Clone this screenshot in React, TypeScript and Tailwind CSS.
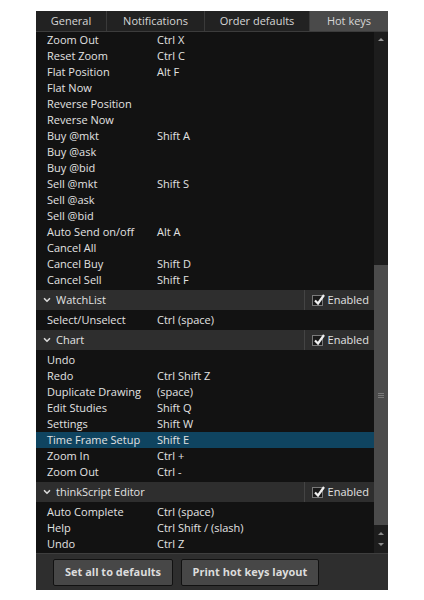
import { ChevronDown } from "lucide-react";

type Row = { label: string; keys?: string; selected?: boolean };

const orderRows: Row[] = [
  { label: "Zoom Out", keys: "Ctrl X" },
  { label: "Reset Zoom", keys: "Ctrl C" },
  { label: "Flat Position", keys: "Alt F" },
  { label: "Flat Now" },
  { label: "Reverse Position" },
  { label: "Reverse Now" },
  { label: "Buy @mkt", keys: "Shift A" },
  { label: "Buy @ask" },
  { label: "Buy @bid" },
  { label: "Sell @mkt", keys: "Shift S" },
  { label: "Sell @ask" },
  { label: "Sell @bid" },
  { label: "Auto Send on/off", keys: "Alt A" },
  { label: "Cancel All" },
  { label: "Cancel Buy", keys: "Shift D" },
  { label: "Cancel Sell", keys: "Shift F" },
];

const watchRows: Row[] = [{ label: "Select/Unselect", keys: "Ctrl (space)" }];

const chartRows: Row[] = [
  { label: "Undo" },
  { label: "Redo", keys: "Ctrl Shift Z" },
  { label: "Duplicate Drawing", keys: "(space)" },
  { label: "Edit Studies", keys: "Shift Q" },
  { label: "Settings", keys: "Shift W" },
  { label: "Time Frame Setup", keys: "Shift E", selected: true },
  { label: "Zoom In", keys: "Ctrl +" },
  { label: "Zoom Out", keys: "Ctrl -" },
];

const scriptRows: Row[] = [
  { label: "Auto Complete", keys: "Ctrl (space)" },
  { label: "Help", keys: "Ctrl Shift / (slash)" },
  { label: "Undo", keys: "Ctrl Z" },
];

const tabs = ["General", "Notifications", "Order defaults", "Hot keys"];

function HotkeyRow({ row }: { row: Row }) {
  return (
    <div className={`flex h-4 shrink-0 items-center ${row.selected ? "bg-[#0f4460]" : ""}`}>
      <span className="w-[121px] pl-[11px] whitespace-nowrap">{row.label}</span>
      <span className="whitespace-nowrap">{row.keys}</span>
    </div>
  );
}

function SectionHeader({ title }: { title: string }) {
  return (
    <div className="my-[2px] flex h-[20px] shrink-0 items-center bg-[#2e2e2e]">
      <ChevronDown className="ml-[6px] h-[10px] w-[10px] text-[#d8d8d8]" strokeWidth={4} />
      <span className="ml-[4px] flex-1">{title}</span>
      <div className="flex h-full items-center border-l border-[#444] pl-[7px] pr-[5px]">
        <span className="relative mr-[5px] flex h-[11px] w-[11px] items-center justify-center border border-[#7a7a7a] bg-[#1a1a1a]">
          <svg viewBox="0 0 12 12" className="absolute -top-[2px] left-0 h-[12px] w-[12px]">
            <path d="M2 6.5 L5 9.5 L11 1" fill="none" stroke="#f0f0f0" strokeWidth="2.2" />
          </svg>
        </span>
        <span>Enabled</span>
      </div>
    </div>
  );
}

export default function App() {
  return (
    <div className="min-h-[600px] bg-white pt-[11px] pl-[36px]">
      <div
        className="w-[352px] text-[11px] leading-4 text-[#e2e2e2]"
        style={{ fontFamily: '"Open Sans", "Noto Sans", sans-serif' }}
      >
        {/* Tabs */}
        <div className="flex h-[21px] border-b border-[#3c3c3c] bg-[#222]">
          {tabs.map((t, i) => (
            <div
              key={t}
              className={`flex items-center justify-center border-r border-[#3a3a3a] text-[11px] text-[#d6d6d6] ${
                i === 0 ? "w-[71px]" : i === 1 ? "w-[98px]" : i === 2 ? "w-[105px]" : "flex-1 border-r-0 bg-[#4a4a4a]"
              }`}
            >
              {t}
            </div>
          ))}
        </div>

        {/* Content */}
        <div className="flex h-[521px] bg-[#121212]">
          <div className="flex flex-1 flex-col overflow-hidden">
            {orderRows.map((r, i) => (
              <HotkeyRow key={"o" + i} row={r} />
            ))}
            <SectionHeader title="WatchList" />
            {watchRows.map((r, i) => (
              <HotkeyRow key={"w" + i} row={r} />
            ))}
            <SectionHeader title="Chart" />
            {chartRows.map((r, i) => (
              <HotkeyRow key={"c" + i} row={r} />
            ))}
            <SectionHeader title="thinkScript Editor" />
            {scriptRows.map((r, i) => (
              <HotkeyRow key={"s" + i} row={r} />
            ))}
          </div>

          {/* Scrollbar */}
          <div className="flex w-[14px] flex-col bg-[#1d1d1d]">
            <div className="flex h-[14px] items-center justify-center">
              <div className="h-0 w-0 border-x-[3px] border-b-[3px] border-x-transparent border-b-[#9a9a9a]" />
            </div>
            <div className="h-[219px]" />
            <div className="flex h-[260px] items-center justify-center bg-[#4b4b4b]">
              <div className="flex flex-col gap-[1px]">
                <div className="h-px w-[6px] bg-[#7a7a7a]" />
                <div className="h-px w-[6px] bg-[#7a7a7a]" />
                <div className="h-px w-[6px] bg-[#7a7a7a]" />
              </div>
            </div>
            <div className="flex flex-1 flex-col items-center justify-center gap-[8px]">
              <div className="h-0 w-0 border-x-[3px] border-b-[3px] border-x-transparent border-b-[#8a8a8a]" />
              <div className="h-0 w-0 border-x-[3px] border-t-[3px] border-x-transparent border-t-[#8a8a8a]" />
            </div>
          </div>
        </div>

        {/* Footer */}
        <div className="flex h-[37px] items-center gap-[8px] border-t border-[#3e3e3e] bg-[#2e2e2e] pl-[17px]">
          <button className="h-[27px] w-[120px] rounded-[2px] border border-[#111] bg-[#474747] text-[11px] font-bold text-[#dcdcdc]">
            Set all to defaults
          </button>
          <button className="h-[27px] w-[138px] rounded-[2px] border border-[#111] bg-[#474747] text-[11px] font-bold text-[#dcdcdc]">
            Print hot keys layout
          </button>
        </div>
      </div>
    </div>
  );
}
